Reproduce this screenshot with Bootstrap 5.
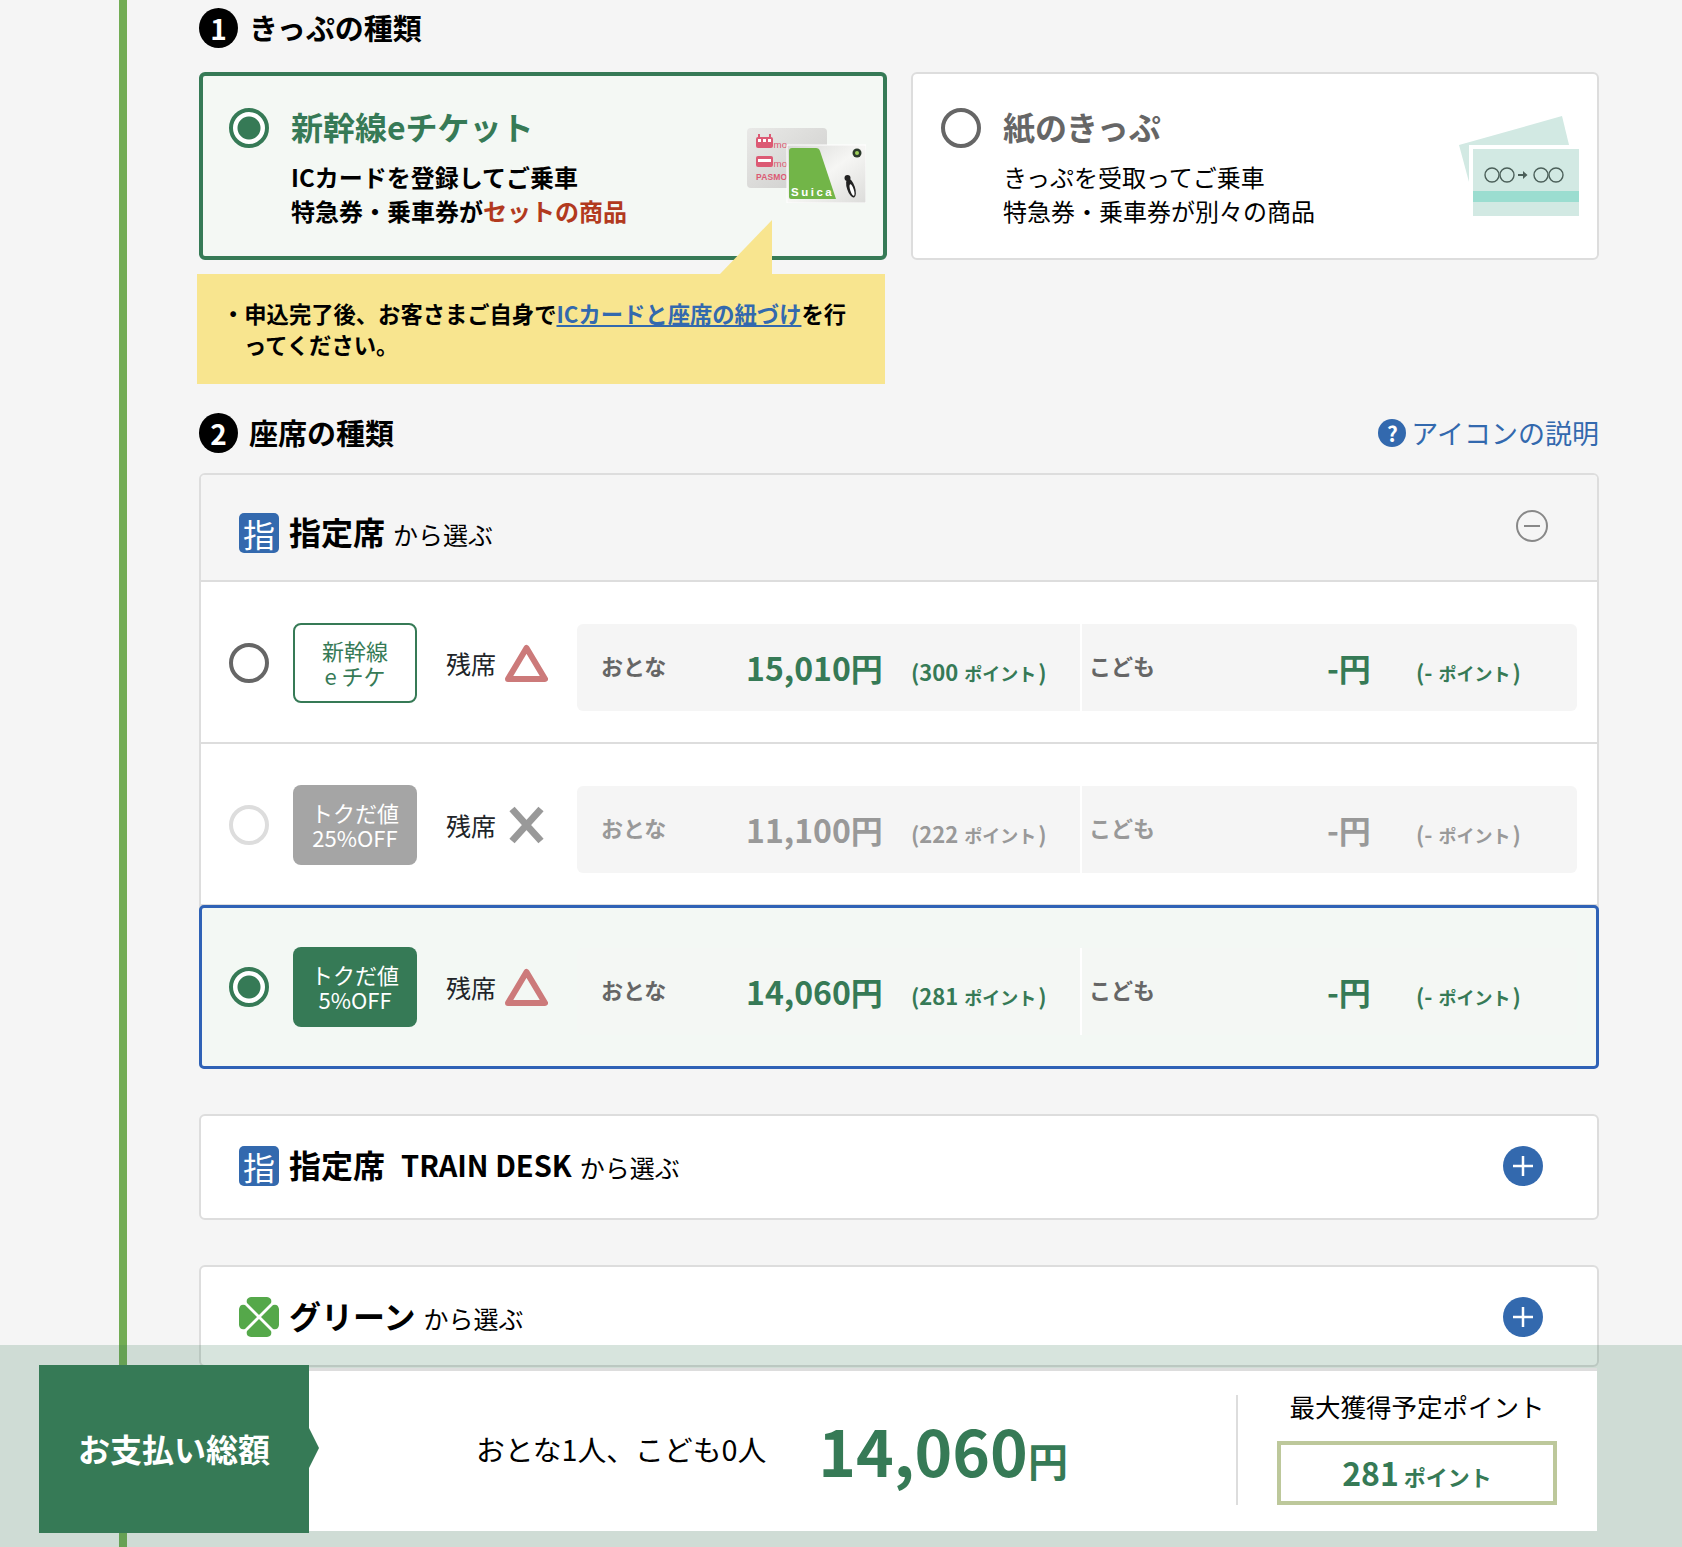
<!DOCTYPE html>
<html lang="ja">
<head>
  <meta charset="UTF-8" />
  <meta name="viewport" content="width=device-width, initial-scale=1.0"/>
  <title>きっぷの種類・座席の種類</title>
  <link href="https://cdn.jsdelivr.net/npm/bootstrap@5.3.2/dist/css/bootstrap.min.css" rel="stylesheet" />
  <style>
    body { background: #f5f5f5; color: #000; font-family: "Noto Sans CJK JP", sans-serif; line-height: 1.3; }
    .page-line { margin-left: 119px; width: 1480px; min-height: 1547px; border-left: 8px solid #72ac54; padding: 8px 0 0 72px; }

    .step-head { height: 40px; }
    .step-second { margin: 29px 0 20px; }
    .step-num { width: 39px; height: 40px; background: #000; color: #fff; font-size: 28px; font-weight: 700; line-height: 40px; text-align: center; }
    .step-title { font-size: 29px; font-weight: 700; line-height: 38px; margin: 0 0 2px 11px; }
    .help-link { color: #3369ae; font-size: 27px; line-height: 38px; text-decoration: none; }
    .help-dot { width: 28px; height: 28px; background: #3369ae; color: #fff; font-size: 21px; font-weight: 700; line-height: 28px; text-align: center; margin-right: 5px; }

    .tk-radio.form-check-input { width: 40px; height: 40px; margin: 0; flex: none; border: 4px solid #666; background-color: #fff; opacity: 1; float: none; }
    .tk-radio.form-check-input:checked { border-color: #367a56; background-color: #fff; background-image: radial-gradient(circle, #367a56 0 11px, transparent 12px); }
    .tk-radio.form-check-input:disabled { border-color: #ddd; opacity: 1; }

    .ticket-row { gap: 24px; margin-top: 24px; }
    .ticket-col { width: 688px; }
    .ticket-card { height: 188px; gap: 22px; border: 2px solid #ddd; border-radius: 6px; background: #fff; padding: 34px 0 0 28px; }
    .ticket-on { border: 4px solid #367a56; background: #f4f8f4; padding: 32px 0 0 26px; }
    .ticket-name { font-size: 32px; font-weight: 700; line-height: 36px; color: #666; }
    .ticket-on .ticket-name { color: #367a56; }
    .ticket-desc { font-size: 24px; line-height: 34px; margin-top: 16px; }
    .ticket-on .ticket-desc { font-weight: 700; }
    .ticket-red { color: #b23a1e; }
    .ticket-pic { position: absolute; }
    .pic-ic { left: 544px; top: 52px; }
    .pic-paper { left: 546px; top: 42px; }

    .note-box { background: #f8e58f; width: 688px; height: 110px; margin: 14px 0 0 -2px; padding: 24px 0 0 47px; font-size: 22.3px; font-weight: 700; line-height: 31px; text-indent: -22px; white-space: nowrap; }
    .note-box a { color: #3369ae; }
    .note-next { text-indent: 0; }
    .note-tail { left: 523px; top: -54px; width: 52px; height: 54px; background: #f8e58f; clip-path: polygon(100% 0, 100% 100%, 0 100%); }

    .seat-panel { border: 2px solid #ddd; border-radius: 6px; background: #fff; }
    .seat-panel > .list-group { border-top: 0; border-bottom: 0; }
    .seat-head { height: 107px; background: #f5f5f5; border-bottom: 2px solid #ddd; border-radius: 4px 4px 0 0; padding: 38px 0 0 38px; }
    .seat-mark { width: 40px; height: 40px; border-radius: 5px; background: #3369ae; color: #fff; font-size: 32px; line-height: 40px; text-align: center; flex: none; }
    .seat-name { font-size: 32px; font-weight: 700; line-height: 36px; margin-left: 10px; }
    .seat-sub { font-size: 25px; line-height: 36px; margin-left: 8px; padding-top: 3px; }
    .seat-en { font-size: 29px; margin-left: 16px; }
    .seat-toggle { position: absolute; right: 49px; top: 35px; }

    .list-group-flush > .list-group-item.seat-row { height: 162px; padding: 2px 20px 0 28px; border: 0; border-bottom: 2px solid #ddd; background: #fff; }
    .list-group-flush > .list-group-item.seat-row.row-on { height: 164px; margin: -1px -2px -2px; padding: 0 19px 0 27px; border: 3px solid #2f62b6; border-radius: 5px; background: #f3f8f4; z-index: 1; }
    .seat-tag { width: 124px; height: 80px; margin-left: 24px; border-radius: 8px; font-size: 22px; line-height: 25px; flex: none; }
    .tag-line { border: 2px solid #367a56; color: #367a56; background: #fff; }
    .tag-gray { background: #a5a5a5; color: #fff; }
    .tag-green { background: #367a56; color: #fff; }
    .seat-left { font-size: 25px; margin-left: 29px; width: 59px; flex: none; white-space: nowrap; }
    .seat-icon { width: 43px; height: 38px; flex: none; }

    .fare-box { width: 1000px; height: 87px; margin: 9px 0 0 29px; background: #f5f5f5; border-radius: 6px; color: #666; padding-top: 20px; }
    .row-on .fare-box { background: #f4f7f4; }
    .fare-half { height: 100%; white-space: nowrap; }
    .fare-adult { width: 505px; padding-left: 24px; margin-top: -20px; padding-top: 20px; height: 87px; border-right: 2px solid #fff; }
    .fare-child { padding-left: 7px; }
    .fare-lab { font-size: 22px; font-weight: 700; width: 145px; align-self: flex-start; line-height: 42px; }
    .fare-child .fare-lab { width: 238px; }
    .fare-yen { font-size: 32px; font-weight: 700; width: 165px; color: #367a56; line-height: 46px; }
    .fare-child .fare-yen { width: 89px; }
    .fare-pt { font-size: 22px; font-weight: 700; color: #367a56; }
    .fare-pt span { font-size: 18px; margin: 0 2px 0 6px; }
    .row-off .fare-box, .row-off .fare-yen, .row-off .fare-pt { color: #999; }

    .plain-panel { margin-top: 45px; height: 106px; padding: 30px 0 0 38px; }
    .green-panel { height: 102px; }
    .plus-dot { right: 54px; top: 30px; width: 40px; height: 40px; background: #3369ae; }

    .pay-bar { height: 202px; background: rgba(54, 122, 86, .2); padding: 20px 0 0 39px; z-index: 5; }
    .pay-label { width: 270px; height: 168px; background: #367a56; color: #fff; font-size: 32px; font-weight: 700; flex: none; }
    .pay-label::after { content: ""; position: absolute; left: 270px; top: 63px; width: 10px; height: 40px; background: #367a56; clip-path: polygon(0 0, 100% 50%, 0 100%); }
    .pay-main { width: 1288px; height: 163px; margin-top: 3px; background: #fff; border-top: 3px solid #ddd; padding: 24px 40px 0 167px; }
    .pay-who { font-size: 28.8px; line-height: 108px; white-space: nowrap; }
    .pay-sum { color: #367a56; font-size: 64px; font-weight: 700; line-height: 108px; margin-left: 52px; white-space: nowrap; }
    .pay-sum span { font-size: 40px; }
    .pay-rule { width: 2px; height: 110px; background: #ddd; margin-left: auto; }
    .pay-point { width: 280px; margin-left: 39px; text-align: center; }
    .pay-point-top { font-size: 25.5px; line-height: 28px; margin-top: -3px; }
    .pay-point-box { height: 64px; margin-top: 21px; border: 4px solid #bdc89b; color: #367a56; font-size: 32px; font-weight: 700; line-height: 54px; }
    .pay-point-box span { font-size: 22px; margin-left: 5px; }
  </style>
</head>
<body>

  <main class="page-line">
    <div class="d-flex align-items-center step-head">
      <span class="step-num rounded-circle">1</span>
      <h2 class="step-title">きっぷの種類</h2>
    </div>

    <div class="d-flex ticket-row">
      <div class="ticket-col">
        <div class="ticket-card ticket-on d-flex position-relative">
          <input class="form-check-input tk-radio" type="radio" name="ticket" checked>
          <div>
            <div class="ticket-name">新幹線eチケット</div>
            <div class="ticket-desc">ICカードを登録してご乗車<br>特急券・乗車券が<span class="ticket-red">セットの商品</span></div>
          </div>
          <svg class="ticket-pic pic-ic" width="119" height="75" viewBox="0 0 119 75">
            <defs>
              <linearGradient id="cardGray" x1="0" y1="0" x2="1" y2="1"><stop offset="0" stop-color="#e9e9e7"/><stop offset="1" stop-color="#cdcdcb"/></linearGradient>
              <linearGradient id="cardSilver" x1="0" y1="0" x2="1" y2="1"><stop offset="0" stop-color="#d8d8d6"/><stop offset=".5" stop-color="#f6f6f4"/><stop offset="1" stop-color="#dcdcda"/></linearGradient>
            </defs>
            <rect width="80" height="60" rx="4" fill="url(#cardGray)"/>
            <g fill="#dc5a74">
              <rect x="9" y="9" width="17" height="11" rx="2"/><rect x="11" y="6" width="2" height="3"/><rect x="22" y="6" width="2" height="3"/>
              <rect x="9" y="28" width="17" height="11" rx="2"/>
            </g>
            <g fill="#fff"><rect x="11" y="11" width="3" height="3"/><rect x="16" y="11" width="3" height="3"/><rect x="21" y="11" width="3" height="3"/><rect x="11" y="31" width="13" height="3"/></g>
            <text x="26.500" y="20" font-family="Liberation Sans" font-size="9.8" fill="#dc5a74">mo</text>
            <text x="26.500" y="39" font-family="Liberation Sans" font-size="9.8" fill="#dc5a74">mo</text>
            <text x="9" y="52" font-family="Liberation Sans" font-size="8.5" font-weight="700" textLength="31" fill="#dc5a74">PASMO</text>
            <rect x="40" y="17" width="79" height="58" fill="url(#cardSilver)" stroke="#fff"/>
            <path d="M42 23q0-3 3-3h24q3 0 4 3l16 48H44q-2 0-2-2z" fill="#72b548"/>
            <text x="44" y="68" font-family="Liberation Sans" font-size="11.500" font-weight="700" letter-spacing="2.500" fill="#fff">Suica</text>
            <circle cx="110" cy="25" r="4.5" fill="#2c3a2c"/><circle cx="110" cy="25" r="2" fill="#9fcf5a"/>
            <ellipse cx="104" cy="60" rx="4" ry="10" fill="#222" transform="rotate(-18 104 60)"/>
            <circle cx="100.500" cy="50" r="3" fill="#222"/>
            <ellipse cx="105" cy="62" rx="1.8" ry="6" fill="#fff" transform="rotate(-18 105 62)"/>
          </svg>
        </div>
        <div class="note-box position-relative">
          <span class="note-tail position-absolute"></span>
          ・申込完了後、お客さまご自身で<a href="#">ICカードと座席の紐づけ</a>を行<br><span class="d-inline-block note-next">ってください。</span>
        </div>
      </div>

      <div class="ticket-col">
        <div class="ticket-card d-flex position-relative">
          <input class="form-check-input tk-radio" type="radio" name="ticket">
          <div>
            <div class="ticket-name">紙のきっぷ</div>
            <div class="ticket-desc">きっぷを受取ってご乗車<br>特急券・乗車券が別々の商品</div>
          </div>
          <svg class="ticket-pic pic-paper" width="120" height="100" viewBox="0 0 120 100">
            <path d="M0 29L103 0l8 33L10 66z" fill="#d2e9e3"/>
            <rect x="10" y="29" width="110" height="71" fill="#fff"/>
            <rect x="14" y="33" width="106" height="67" fill="#d2e9e3"/>
            <rect x="14" y="75" width="106" height="11" fill="#9bddd0"/>
            <g fill="none" stroke="#4b5f59" stroke-width="1.4">
              <circle cx="33" cy="59" r="7"/><circle cx="48" cy="59" r="7"/><circle cx="82" cy="59" r="7"/><circle cx="97" cy="59" r="7"/>
            </g>
            <path d="M59 58h5v-3l4.500 4-4.500 4v-3h-5z" fill="#4b5f59"/>
          </svg>
        </div>
      </div>
    </div>

    <div class="d-flex align-items-center step-head step-second">
      <span class="step-num rounded-circle">2</span>
      <h2 class="step-title">座席の種類</h2>
      <a class="help-link ms-auto d-flex align-items-center" href="#"><span class="help-dot rounded-circle">?</span>アイコンの説明</a>
    </div>

    <section class="seat-panel card">
      <div class="seat-head d-flex position-relative">
        <span class="seat-mark">指</span>
        <span class="seat-name">指定席</span>
        <span class="seat-sub">から選ぶ</span>
        <svg class="seat-toggle" width="32" height="32" viewBox="0 0 32 32" fill="none" stroke="#888" stroke-width="2"><circle cx="16" cy="16" r="15"/><path d="M8 16h16"/></svg>
      </div>
      <ul class="list-group list-group-flush">
        <li class="list-group-item seat-row d-flex align-items-center">
          <input class="form-check-input tk-radio" type="radio" name="seat">
          <div class="seat-tag tag-line d-flex align-items-center justify-content-center text-center">新幹線<br>e チケ</div>
          <span class="seat-left">残席</span>
          <svg class="seat-icon" viewBox="0 0 43 38"><path d="M21.5 4L40 35H3z" fill="none" stroke="#cc7a7a" stroke-width="6" stroke-linejoin="round"/></svg>
          <div class="fare-box d-flex">
            <div class="fare-half fare-adult d-flex align-items-baseline"><span class="fare-lab">おとな</span><span class="fare-yen">15,010円</span><span class="fare-pt">(300<span>ポイント</span>)</span></div>
            <div class="fare-half fare-child d-flex align-items-baseline"><span class="fare-lab">こども</span><span class="fare-yen">-円</span><span class="fare-pt">(-<span>ポイント</span>)</span></div>
          </div>
        </li>
        <li class="list-group-item seat-row row-off d-flex align-items-center">
          <input class="form-check-input tk-radio" type="radio" name="seat" disabled>
          <div class="seat-tag tag-gray d-flex align-items-center justify-content-center text-center">トクだ値<br>25%OFF</div>
          <span class="seat-left">残席</span>
          <svg class="seat-icon" viewBox="0 0 43 38"><path d="M7 3l29 32M36 3L7 35" fill="none" stroke="#999" stroke-width="7"/></svg>
          <div class="fare-box d-flex">
            <div class="fare-half fare-adult d-flex align-items-baseline"><span class="fare-lab">おとな</span><span class="fare-yen">11,100円</span><span class="fare-pt">(222<span>ポイント</span>)</span></div>
            <div class="fare-half fare-child d-flex align-items-baseline"><span class="fare-lab">こども</span><span class="fare-yen">-円</span><span class="fare-pt">(-<span>ポイント</span>)</span></div>
          </div>
        </li>
        <li class="list-group-item seat-row row-on d-flex align-items-center">
          <input class="form-check-input tk-radio" type="radio" name="seat" checked>
          <div class="seat-tag tag-green d-flex align-items-center justify-content-center text-center">トクだ値<br>5%OFF</div>
          <span class="seat-left">残席</span>
          <svg class="seat-icon" viewBox="0 0 43 38"><path d="M21.5 4L40 35H3z" fill="none" stroke="#cc7a7a" stroke-width="6" stroke-linejoin="round"/></svg>
          <div class="fare-box d-flex">
            <div class="fare-half fare-adult d-flex align-items-baseline"><span class="fare-lab">おとな</span><span class="fare-yen">14,060円</span><span class="fare-pt">(281<span>ポイント</span>)</span></div>
            <div class="fare-half fare-child d-flex align-items-baseline"><span class="fare-lab">こども</span><span class="fare-yen">-円</span><span class="fare-pt">(-<span>ポイント</span>)</span></div>
          </div>
        </li>
      </ul>
    </section>

    <section class="seat-panel plain-panel d-flex position-relative">
      <span class="seat-mark">指</span>
      <span class="seat-name">指定席</span>
      <span class="seat-name seat-en">TRAIN DESK</span>
      <span class="seat-sub">から選ぶ</span>
      <svg class="plus-dot position-absolute rounded-circle" viewBox="0 0 40 40"><path d="M20 10v20M10 20h20" stroke="#fff" stroke-width="2.5"/></svg>
    </section>

    <section class="seat-panel plain-panel green-panel d-flex position-relative">
      <svg width="40" height="40" viewBox="0 0 40 40" class="flex-shrink-0" fill="#55a84a">
        <path id="petal" d="M20 18L8 6Q6.500 1 12 0H28Q33.500 1 32 6Z"/>
        <use href="#petal" transform="rotate(90 20 20)"/>
        <use href="#petal" transform="rotate(180 20 20)"/>
        <use href="#petal" transform="rotate(270 20 20)"/>
      </svg>
      <span class="seat-name">グリーン</span>
      <span class="seat-sub">から選ぶ</span>
      <svg class="plus-dot position-absolute rounded-circle" viewBox="0 0 40 40"><path d="M20 10v20M10 20h20" stroke="#fff" stroke-width="2.5"/></svg>
    </section>
  </main>

  <div class="pay-bar position-fixed bottom-0 start-0 end-0 d-flex">
    <div class="pay-label position-relative d-flex align-items-center justify-content-center">お支払い総額</div>
    <div class="pay-main d-flex">
      <div class="pay-who">おとな1人、こども0人</div>
      <div class="pay-sum">14,060<span>円</span></div>
      <div class="pay-rule"></div>
      <div class="pay-point">
        <div class="pay-point-top">最大獲得予定ポイント</div>
        <div class="pay-point-box">281<span>ポイント</span></div>
      </div>
    </div>
  </div>

  <script src="https://cdn.jsdelivr.net/npm/bootstrap@5.3.2/dist/js/bootstrap.bundle.min.js"></script>
</body>
</html>
